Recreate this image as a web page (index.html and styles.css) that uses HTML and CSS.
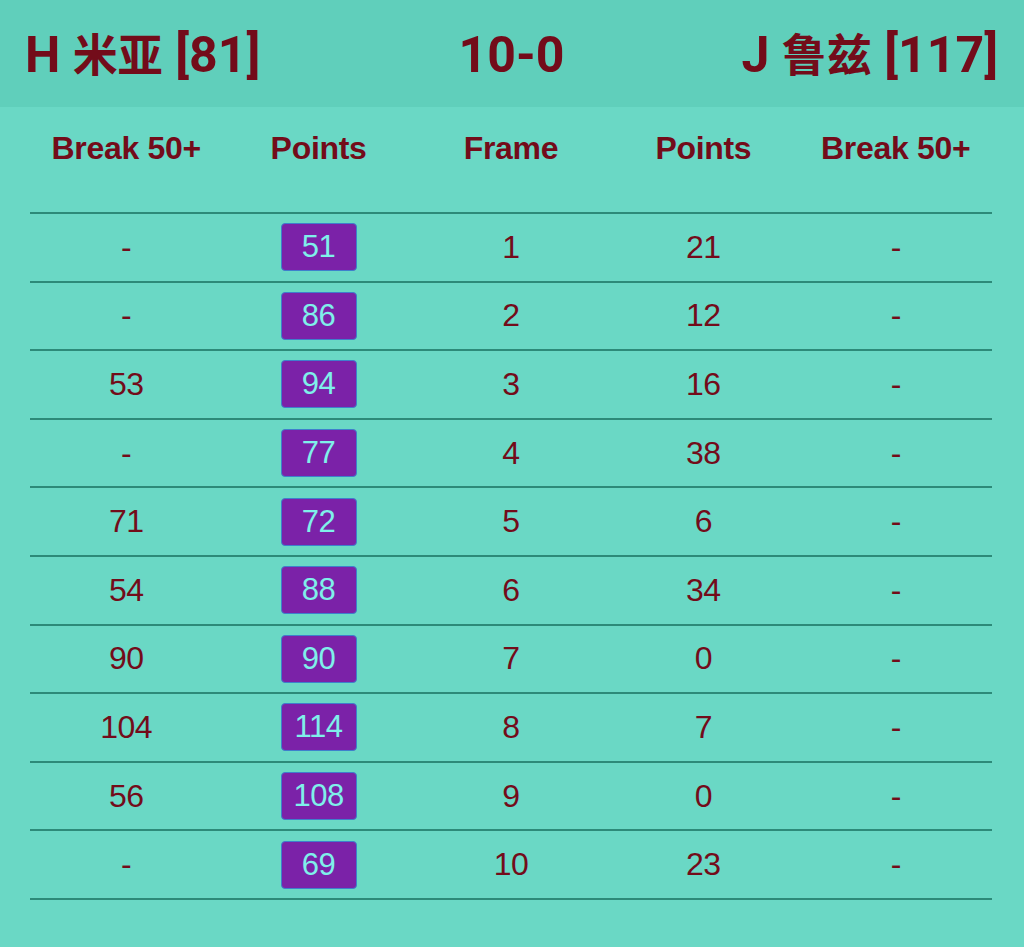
FILE: index.html
```html
<!DOCTYPE html>
<html lang="zh">
<head>
<meta charset="utf-8">
<title>Match</title>
<link rel="stylesheet" href="styles.css">
</head>
<body>
<header class="scorebar">
  <div class="player">H <span class="cjk">米亚</span> [81]</div>
  <div class="score">10-0</div>
  <div class="player player-right">J <span class="cjk">鲁兹</span> [117]</div>
</header>
<main class="content">
  <table class="frames">
    <thead>
      <tr><th>Break 50+</th><th>Points</th><th>Frame</th><th>Points</th><th>Break 50+</th></tr>
    </thead>
    <tbody>
      <tr><td>-</td><td><span class="badge">51</span></td><td>1</td><td>21</td><td>-</td></tr>
      <tr><td>-</td><td><span class="badge">86</span></td><td>2</td><td>12</td><td>-</td></tr>
      <tr><td>53</td><td><span class="badge">94</span></td><td>3</td><td>16</td><td>-</td></tr>
      <tr><td>-</td><td><span class="badge">77</span></td><td>4</td><td>38</td><td>-</td></tr>
      <tr><td>71</td><td><span class="badge">72</span></td><td>5</td><td>6</td><td>-</td></tr>
      <tr><td>54</td><td><span class="badge">88</span></td><td>6</td><td>34</td><td>-</td></tr>
      <tr><td>90</td><td><span class="badge">90</span></td><td>7</td><td>0</td><td>-</td></tr>
      <tr><td>104</td><td><span class="badge">114</span></td><td>8</td><td>7</td><td>-</td></tr>
      <tr><td>56</td><td><span class="badge">108</span></td><td>9</td><td>0</td><td>-</td></tr>
      <tr><td>-</td><td><span class="badge">69</span></td><td>10</td><td>23</td><td>-</td></tr>
    </tbody>
  </table>
</main>
</body>
</html>
```
FILE: styles.css
```css
html, body {
  margin: 0;
  padding: 0;
}
body {
  background: #6ad8c5;
  color: #730c1a;
  font-family: "Liberation Sans", Arial, sans-serif;
  min-height: 947px;
}
.scorebar {
  height: 107px;
  background: #60cfbb;
  display: grid;
  grid-template-columns: 1fr auto 1fr;
  align-items: center;
  padding: 2px 26px 0 25px;
  box-sizing: border-box;
  font-family: Roboto, "Noto Sans CJK SC", sans-serif;
  font-weight: 700;
  font-size: 50px;
  line-height: 1;
}
.player {
  white-space: nowrap;
}
.player-right {
  text-align: right;
}
.score {
  text-align: center;
}
.cjk {
  font-family: "Noto Sans CJK SC", sans-serif;
  font-size: 45px;
  font-weight: 700;
}
.content {
  padding: 0 32px 0 30px;
}
.frames {
  width: 962px;
  border-collapse: collapse;
  table-layout: fixed;
}
.frames th {
  font-size: 32px;
  font-weight: 700;
  height: 106px;
  vertical-align: top;
  padding: 23px 0 0;
  box-sizing: border-box;
  border-bottom: 2px solid #2d8a79;
  letter-spacing: -0.3px;
}
.frames td {
  font-size: 32px;
  text-align: center;
  height: 66.6px;
  padding: 0;
  border-bottom: 2px solid #2d8a79;
  letter-spacing: -0.5px;
}
.badge {
  display: inline-block;
  width: 76px;
  height: 48px;
  line-height: 46px;
  box-sizing: border-box;
  background: #7b22a8;
  color: #7ff0ea;
  border: 1px solid #3f7fcc;
  border-radius: 4px;
  font-size: 31px;
  vertical-align: middle;
}
```
